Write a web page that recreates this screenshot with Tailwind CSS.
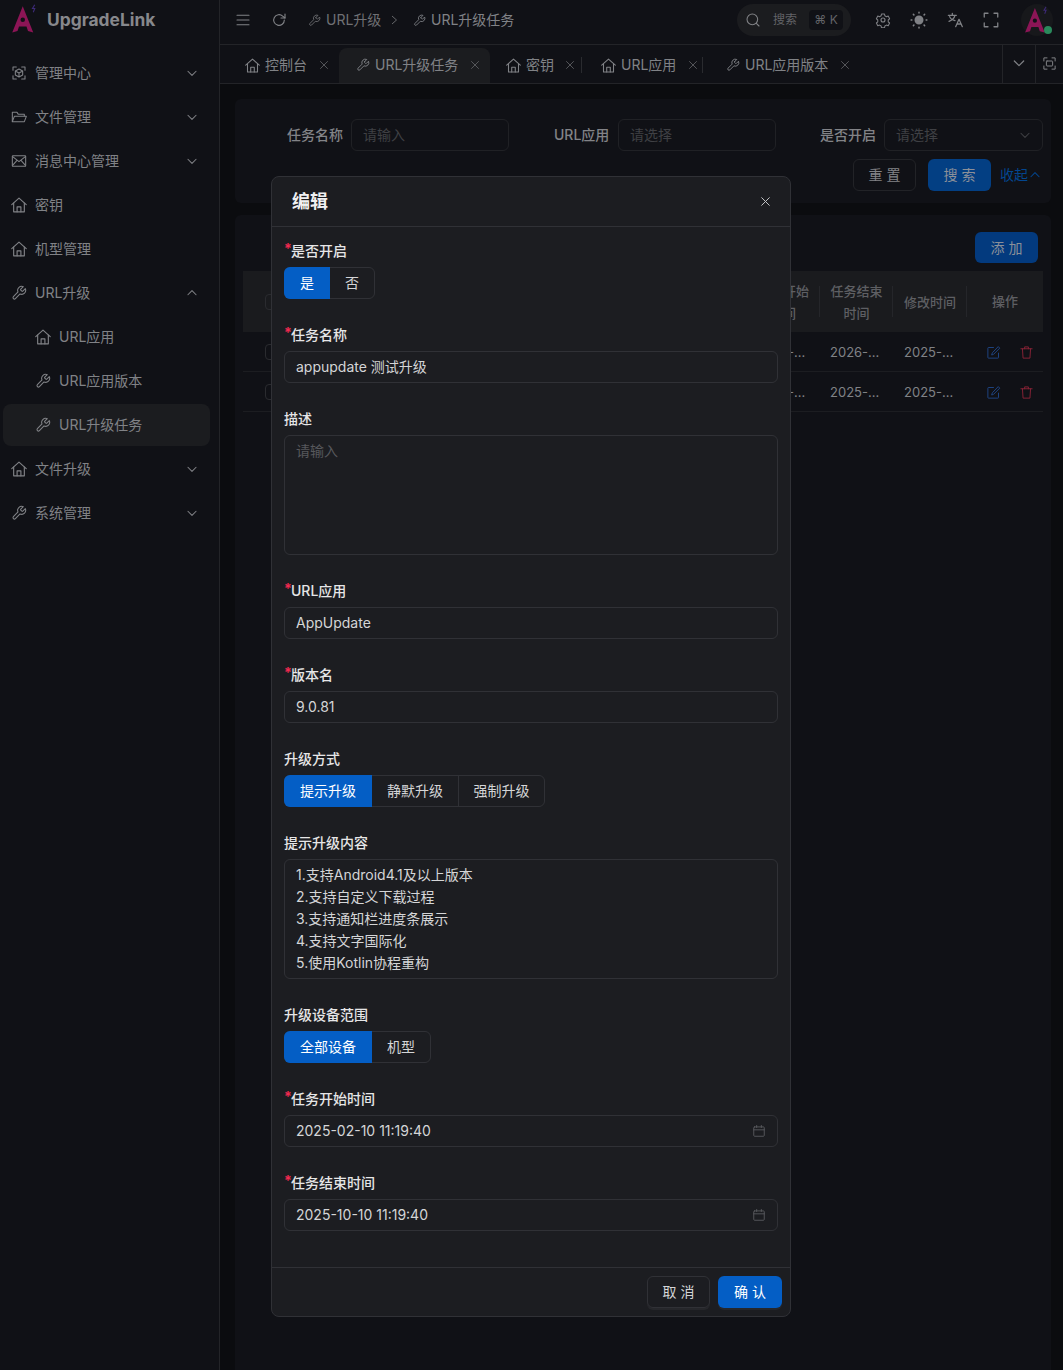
<!DOCTYPE html>
<html lang="zh">
<head>
<meta charset="utf-8">
<script src="https://cdn.jsdelivr.net/npm/@tailwindcss/browser@4"></script>
<title>UpgradeLink</title>
</head>
<body class="font-['Inter','Noto_Sans_CJK_SC',sans-serif] bg-[#0b0c0f] text-sm">
<svg class="hidden">
<symbol id="home" viewBox="1.5 1.5 21 21" fill="none" stroke="currentColor" stroke-width="1.5" stroke-linecap="round" stroke-linejoin="round"><path d="M2.5 11.5 12 3l9.500 8.500"/><path d="M5 9.500V21h14V9.500"/><path d="M9.500 21v-6.500h5V21"/></symbol>
<symbol id="wrench" viewBox="0 0 24 24" fill="none" stroke="currentColor" stroke-width="1.6" stroke-linecap="round" stroke-linejoin="round"><path d="M14.700 6.300a1 1 0 0 0 0 1.400l1.600 1.600a1 1 0 0 0 1.400 0l3.770-3.770a6 6 0 0 1-7.940 7.940l-6.910 6.910a2.120 2.120 0 0 1-3-3l6.910-6.910a6 6 0 0 1 7.940-7.940l-3.760 3.760z"/></symbol>
<symbol id="down" viewBox="0 0 24 24" fill="none" stroke="currentColor" stroke-width="1.800" stroke-linecap="round" stroke-linejoin="round"><path d="m5 9 7 7 7-7"/></symbol>
<symbol id="up" viewBox="0 0 24 24" fill="none" stroke="currentColor" stroke-width="1.800" stroke-linecap="round" stroke-linejoin="round"><path d="m5 15 7-7 7 7"/></symbol>
<symbol id="x" viewBox="0 0 24 24" fill="none" stroke="currentColor" stroke-width="1.800" stroke-linecap="round"><path d="M5 5l14 14M19 5 5 19"/></symbol>
<symbol id="cal" viewBox="0 0 24 24" fill="none" stroke="currentColor" stroke-width="1.500" stroke-linecap="round" stroke-linejoin="round"><rect x="3" y="5" width="18" height="16" rx="1.500"/><path d="M3 10h18M8 2.500V6M16 2.500V6"/></symbol>
<symbol id="logo" viewBox="0 0 40 40"><path d="M17 3 31 38l-7-2-2-6H12l-2 6-7 2z" fill="currentColor"/><circle cx="17" cy="21" r="3" fill="#101116"/><path d="M33 1l-3 5h3l-2 5" fill="none" stroke="#3d2a78" stroke-width="1.500"/></symbol>
<symbol id="edit" viewBox="0 0 24 24" fill="none" stroke="currentColor" stroke-width="1.500" stroke-linecap="round" stroke-linejoin="round"><path d="M20 13v7a1 1 0 0 1-1 1H4a1 1 0 0 1-1-1V5a1 1 0 0 1 1-1h8"/><path d="M20 3l2 2-10 10-3 1 1-3z"/></symbol>
<symbol id="trash" viewBox="0 0 24 24" fill="none" stroke="currentColor" stroke-width="1.500" stroke-linecap="round" stroke-linejoin="round"><path d="M3 6h18M9 6V3h6v3M5.500 6l1 15h11l1-15"/></symbol>
</svg>

<div class="relative flex w-[1063px] h-[1370px] overflow-hidden">
  <!-- sidebar -->
  <aside class="w-[220px] shrink-0 h-full bg-[#101116] border-r border-[#232428] text-[#808286]">
    <div class="h-[44px] flex items-center pl-[10px]">
      <svg class="w-[30px] h-[34px] text-[#8c1556] -mt-[6px]"><use href="#logo"/></svg>
      <span class="ml-[7px] text-[17.4px] font-bold text-[#87888c] leading-none -mt-[4px]">UpgradeLink</span>
    </div>
    <nav class="mt-[7px] flex flex-col">
      <div class="h-[44px] flex items-center pl-[11px] pr-[20px]">
        <svg class="w-[16px] h-[16px]" viewBox="0 0 24 24" fill="none" stroke="currentColor" stroke-width="1.600" stroke-linecap="round" stroke-linejoin="round"><path d="M3 8V3h5M16 3h5v5M21 16v5h-5M8 21H3v-5"/><path d="m12 6 5.500 3v6L12 18l-5.500-3V9zM12 12l5.500-3M12 12 6.500 9M12 12v6"/></svg>
        <span class="ml-[8px] flex-1">管理中心</span><svg class="w-[14px] h-[14px]"><use href="#down"/></svg>
      </div>
      <div class="h-[44px] flex items-center pl-[11px] pr-[20px]">
        <svg class="w-[16px] h-[16px]" viewBox="0 0 24 24" fill="none" stroke="currentColor" stroke-width="1.600" stroke-linejoin="round"><path d="M2 19V5h7l2 3h9v3"/><path d="M2 19l3-8h18l-3 8z"/></svg>
        <span class="ml-[8px] flex-1">文件管理</span><svg class="w-[14px] h-[14px]"><use href="#down"/></svg>
      </div>
      <div class="h-[44px] flex items-center pl-[11px] pr-[20px]">
        <svg class="w-[16px] h-[16px]" viewBox="0 0 24 24" fill="none" stroke="currentColor" stroke-width="1.600" stroke-linejoin="round"><rect x="2" y="4" width="20" height="16" rx="1"/><path d="m2 5 10 8 10-8M2 19l7-8M22 19l-7-8"/></svg>
        <span class="ml-[8px] flex-1">消息中心管理</span><svg class="w-[14px] h-[14px]"><use href="#down"/></svg>
      </div>
      <div class="h-[44px] flex items-center pl-[11px] pr-[20px]">
        <svg class="w-[16px] h-[16px]"><use href="#home"/></svg><span class="ml-[8px] flex-1">密钥</span>
      </div>
      <div class="h-[44px] flex items-center pl-[11px] pr-[20px]">
        <svg class="w-[16px] h-[16px]"><use href="#home"/></svg><span class="ml-[8px] flex-1">机型管理</span>
      </div>
      <div class="h-[44px] flex items-center pl-[11px] pr-[20px]">
        <svg class="w-[16px] h-[16px]"><use href="#wrench"/></svg><span class="ml-[8px] flex-1">URL升级</span><svg class="w-[14px] h-[14px]"><use href="#up"/></svg>
      </div>
      <div class="h-[44px] flex items-center pl-[35px] pr-[20px]">
        <svg class="w-[16px] h-[16px]"><use href="#home"/></svg><span class="ml-[8px] flex-1">URL应用</span>
      </div>
      <div class="h-[44px] flex items-center pl-[35px] pr-[20px]">
        <svg class="w-[16px] h-[16px]"><use href="#wrench"/></svg><span class="ml-[8px] flex-1">URL应用版本</span>
      </div>
      <div class="h-[42px] my-[1px] ml-[3px] mr-[9px] rounded-lg bg-[#1b1c1f] flex items-center pl-[32px]">
        <svg class="w-[16px] h-[16px]"><use href="#wrench"/></svg><span class="ml-[8px] flex-1">URL升级任务</span>
      </div>
      <div class="h-[44px] flex items-center pl-[11px] pr-[20px]">
        <svg class="w-[16px] h-[16px]"><use href="#home"/></svg><span class="ml-[8px] flex-1">文件升级</span><svg class="w-[14px] h-[14px]"><use href="#down"/></svg>
      </div>
      <div class="h-[44px] flex items-center pl-[11px] pr-[20px]">
        <svg class="w-[16px] h-[16px]"><use href="#wrench"/></svg><span class="ml-[8px] flex-1">系统管理</span><svg class="w-[14px] h-[14px]"><use href="#down"/></svg>
      </div>
    </nav>
  </aside>

  <div class="flex-1 min-w-0 flex flex-col">
    <!-- header -->
    <header class="h-[45px] shrink-0 bg-[#101116] border-b border-[#232428] flex items-center pb-[4px] text-[#808286]">
      <svg class="ml-[15px] w-[16px] h-[16px]" viewBox="0 0 24 24" fill="none" stroke="currentColor" stroke-width="1.600" stroke-linecap="round"><path d="M3 5h18M3 12h18M3 19h18"/></svg>
      <svg class="ml-[20px] w-[16px] h-[16px]" viewBox="0 0 24 24" fill="none" stroke="currentColor" stroke-width="1.700" stroke-linecap="round" stroke-linejoin="round"><path d="M20 12a8 8 0 1 1-2.500-5.800L21 9"/><path d="M21 3v6h-6"/></svg>
      <svg class="ml-[21px] w-[13px] h-[13px] text-[#6f7074]"><use href="#wrench"/></svg>
      <span class="ml-[5px] text-[#6f7074] w-[56px]">URL升级</span>
      <svg class="ml-[6px] w-[12px] h-[12px] text-[#6f7074]" viewBox="0 0 24 24" fill="none" stroke="currentColor" stroke-width="1.800"><path d="m8 4 9 8-9 8"/></svg>
      <svg class="ml-[13px] w-[13px] h-[13px]"><use href="#wrench"/></svg>
      <span class="ml-[5px] w-[85px]">URL升级任务</span>
      <div class="ml-[221px] w-[114px] h-[32px] rounded-full bg-[#1b1c1f] flex items-center pl-[8px]">
        <svg class="w-[16px] h-[16px]" viewBox="0 0 24 24" fill="none" stroke="currentColor" stroke-width="1.600" stroke-linecap="round"><circle cx="11" cy="11" r="8"/><path d="m17 17 4 4"/></svg>
        <span class="ml-[12px] text-xs text-[#626367]">搜索</span>
        <span class="ml-[12px] w-[34px] h-[20px] rounded bg-[#101116] text-xs text-[#626367] flex items-center justify-center">⌘ K</span>
      </div>
      <svg class="ml-[24px] w-[16px] h-[16px]" viewBox="0 0 24 24" fill="none" stroke="currentColor" stroke-width="1.700" stroke-linejoin="round"><path d="M9.500 2h5l.6 3 2.700 1.500 2.900-1 2.300 4.500-2.300 2 0 3 2.300 2-2.300 4.500-2.900-1-2.700 1.500-.6 3h-5l-.6-3-2.700-1.500-2.900 1L1 17l2.300-2v-3L1 10l2.300-4.500 2.900 1L8.900 5z" transform="translate(1.200 1.200) scale(.9)"/><circle cx="12" cy="12" r="3"/></svg>
      <svg class="ml-[19px] w-[18px] h-[18px]" viewBox="0 0 24 24" fill="none" stroke="currentColor" stroke-width="2" stroke-linecap="round"><circle cx="12" cy="12" r="5" fill="currentColor"/><path d="M12 1.500v1M12 21.500v1M1.500 12h1M21.500 12h1M4.500 4.500l.7.7M18.800 18.800l.7.7M4.500 19.500l.7-.7M18.800 5.200l.7-.7"/></svg>
      <svg class="ml-[19px] w-[16px] h-[16px]" viewBox="0 0 24 24" fill="none" stroke="currentColor" stroke-width="1.900" stroke-linecap="round" stroke-linejoin="round"><path d="M2 5h12M8 2v3M12 5c-1 4-4 7-9 9M4 7c1 3 4 5 8 6M13 22l5-11 5 11M15 18h6"/></svg>
      <svg class="ml-[19px] w-[18px] h-[18px]" viewBox="0 0 24 24" fill="none" stroke="currentColor" stroke-width="1.700" stroke-linecap="round" stroke-linejoin="round"><path d="M3 8V3h5M16 3h5v5M21 16v5h-5M8 21H3v-5"/></svg>
      <div class="relative ml-[21px] w-[32px] h-[32px] rounded-full bg-[#17181b] flex items-center justify-center">
        <svg class="w-[28px] h-[32px] text-[#8c1556]"><use href="#logo"/></svg>
        <span class="absolute right-[1px] bottom-[2px] w-[8px] h-[8px] rounded-full bg-[#2a8a5c]"></span>
      </div>
    </header>
    <!-- tabs -->
    <div class="h-[39px] shrink-0 bg-[#101116] border-b border-[#232428] flex items-end text-[#808286] relative">
      <div class="w-[782px] h-full flex items-end overflow-hidden">
        <div class="h-[35px] flex items-center pb-[1px] pl-[25px] w-[119px]">
          <svg class="w-[15px] h-[15px]"><use href="#home"/></svg><span class="ml-[5px]">控制台</span><svg class="ml-[11px] w-[12px] h-[12px] text-[#5c5d61]"><use href="#x"/></svg>
        </div>
        <div class="h-[35px] w-[151px] flex items-center pb-[1px] pl-[17px] rounded-t-lg bg-[#1b1c1f]">
          <svg class="w-[14px] h-[14px]"><use href="#wrench"/></svg><span class="ml-[5px]">URL升级任务</span><svg class="ml-[11px] w-[12px] h-[12px] text-[#5c5d61]"><use href="#x"/></svg>
        </div>
        <div class="h-[35px] w-[92px] flex items-center pb-[1px] pl-[16px] relative">
          <svg class="w-[15px] h-[15px]"><use href="#home"/></svg><span class="ml-[5px]">密钥</span><svg class="ml-[10px] w-[12px] h-[12px] text-[#5c5d61]"><use href="#x"/></svg>
          <span class="absolute right-0 top-[9px] h-[16px] w-px bg-[#2a2b2f]"></span>
        </div>
        <div class="h-[35px] w-[121px] flex items-center pb-[1px] pl-[19px] relative">
          <svg class="w-[15px] h-[15px]"><use href="#home"/></svg><span class="ml-[5px]">URL应用</span><svg class="ml-[11px] w-[12px] h-[12px] text-[#5c5d61]"><use href="#x"/></svg>
          <span class="absolute right-0 top-[9px] h-[16px] w-px bg-[#2a2b2f]"></span>
        </div>
        <div class="h-[35px] flex items-center pb-[1px] pl-[23px]">
          <svg class="w-[14px] h-[14px]"><use href="#wrench"/></svg><span class="ml-[5px]">URL应用版本</span><svg class="ml-[11px] w-[12px] h-[12px] text-[#5c5d61]"><use href="#x"/></svg>
        </div>
      </div>
      <div class="w-[33px] h-full pb-[2px] border-l border-[#232428] flex items-center justify-center"><svg class="w-[16px] h-[16px]"><use href="#down"/></svg></div>
      <div class="flex-1 h-full pb-[2px] border-l border-[#232428] flex items-center justify-center"><svg class="w-[15px] h-[15px]" viewBox="0 0 24 24" fill="none" stroke="currentColor" stroke-width="1.600" stroke-linecap="round" stroke-linejoin="round"><path d="M3 8V3h5M16 3h5v5M21 16v5h-5M8 21H3v-5"/><rect x="7" y="8" width="10" height="8" rx="1"/></svg></div>
    </div>
    <!-- main -->
    <main class="flex-1 min-h-0 px-[15px] pt-[15px] flex flex-col gap-[12px] text-[#808286]">
      <section class="h-[104px] shrink-0 w-[816px] rounded-md bg-[#101116] pt-[20px]">
        <div class="flex items-center h-[32px] pl-[52px]">
          <span class="w-[56px] font-medium text-[#828387]">任务名称</span>
          <div class="ml-[8px] w-[158px] h-[32px] rounded-md border border-[#202125] flex items-center px-[11px] text-[#3f4044]">请输入</div>
          <span class="ml-[45px] w-[56px] font-medium text-[#828387]">URL应用</span>
          <div class="ml-[8px] w-[158px] h-[32px] rounded-md border border-[#202125] flex items-center px-[11px] text-[#3f4044]">请选择</div>
          <span class="ml-[44px] w-[56px] font-medium text-[#828387]">是否开启</span>
          <div class="ml-[8px] w-[159px] h-[32px] rounded-md border border-[#202125] flex items-center justify-between pl-[11px] pr-[10px] text-[#3f4044]">请选择<svg class="w-[14px] h-[14px]"><use href="#down"/></svg></div>
        </div>
        <div class="flex items-center justify-end h-[32px] mt-[8px] pr-[4px]">
          <div class="w-[63px] h-[32px] rounded-md border border-[#222327] flex items-center justify-center text-[#828387]">重 置</div>
          <div class="ml-[12px] w-[63px] h-[32px] rounded-md bg-[#033f83] flex items-center justify-center text-[#8b9099]">搜 索</div>
          <span class="ml-[9px] text-[#03468f]">收起</span>
          <svg class="w-[14px] h-[14px] text-[#03468f] mr-[5px]"><use href="#up"/></svg>
        </div>
      </section>
      <section class="flex-1 w-[816px] bg-[#101116] rounded-t-md pl-[8px] pt-[17px]">
        <div class="h-[31px] flex justify-end pr-[13px]">
          <div class="w-[63px] h-[31px] rounded-md bg-[#033a7e] flex items-center justify-center text-[#8b9099]">添 加</div>
        </div>
        <div class="mt-[8px] w-[800px] grid grid-cols-[503px_74px_73px_74px_76px] rounded-t-md text-[13px]">
          <div class="h-[61px] bg-[#1a1b1e] pl-[22px] flex items-center"><span class="w-[16px] h-[16px] rounded border border-[#2a2b2f]"></span></div>
          <div class="relative h-[61px] bg-[#1a1b1e] flex items-center justify-center text-center leading-[22px] text-[#5e5f63] font-medium">任务开始<br>时间<span class="absolute right-0 top-[15px] h-[31px] w-px bg-[#25262a]"></span></div>
          <div class="relative h-[61px] bg-[#1a1b1e] flex items-center justify-center text-center leading-[22px] text-[#5e5f63] font-medium">任务结束<br>时间<span class="absolute right-0 top-[15px] h-[31px] w-px bg-[#25262a]"></span></div>
          <div class="relative h-[61px] bg-[#1a1b1e] flex items-center justify-center text-center leading-[22px] text-[#5e5f63] font-medium">修改时间<span class="absolute right-0 top-[15px] h-[31px] w-px bg-[#25262a]"></span></div>
          <div class="h-[61px] bg-[#1a1b1e] flex items-center justify-center text-center text-[#5e5f63] font-medium">操作</div>

          <div class="h-[40px] border-b border-[#1c1d21] pl-[22px] flex items-center"><span class="w-[16px] h-[16px] rounded border border-[#2a2b2f]"></span></div>
          <div class="h-[40px] pt-[2px] border-b border-[#1c1d21] flex items-center pl-[10px]">2025-...</div>
          <div class="h-[40px] pt-[2px] border-b border-[#1c1d21] flex items-center pl-[10px]">2026-...</div>
          <div class="h-[40px] pt-[2px] border-b border-[#1c1d21] flex items-center pl-[11px]">2025-...</div>
          <div class="h-[40px] pt-[2px] border-b border-[#1c1d21] flex items-center pl-[19px] gap-[18px]"><svg class="w-[15px] h-[15px] text-[#1f4585]"><use href="#edit"/></svg><svg class="w-[15px] h-[15px] text-[#8a2236]"><use href="#trash"/></svg></div>

          <div class="h-[40px] border-b border-[#1c1d21] pl-[22px] flex items-center"><span class="w-[16px] h-[16px] rounded border border-[#2a2b2f]"></span></div>
          <div class="h-[40px] pt-[2px] border-b border-[#1c1d21] flex items-center pl-[10px]">2025-...</div>
          <div class="h-[40px] pt-[2px] border-b border-[#1c1d21] flex items-center pl-[10px]">2025-...</div>
          <div class="h-[40px] pt-[2px] border-b border-[#1c1d21] flex items-center pl-[11px]">2025-...</div>
          <div class="h-[40px] pt-[2px] border-b border-[#1c1d21] flex items-center pl-[19px] gap-[18px]"><svg class="w-[15px] h-[15px] text-[#1f4585]"><use href="#edit"/></svg><svg class="w-[15px] h-[15px] text-[#8a2236]"><use href="#trash"/></svg></div>
        </div>
      </section>
    </main>
  </div>

  <!-- modal -->
  <div class="absolute left-[271px] top-[176px] w-[520px] h-[1141px] rounded-lg bg-[#1c1d21] border border-[#303136] flex flex-col text-[#d4d5d7]">
    <div class="h-[50px] shrink-0 border-b border-[#303136] flex items-center justify-between pl-[20px] pr-[18px]">
      <span class="text-[18px] font-bold text-[#f0f0f1]">编辑</span>
      <svg class="w-[13px] h-[13px] text-[#c4c5c7]"><use href="#x"/></svg>
    </div>
    <div class="flex-1 px-[12px] pt-[8px]">
      <div class="h-[32px] flex items-center font-medium text-[#e6e6e7]"><span class="w-[7px] shrink-0 text-[#f0294f] font-bold -mt-[4px]">*</span>是否开启</div>
      <div class="flex h-[32px] w-[91px] mb-[20px] rounded-md border border-[#303136]">
        <div class="w-[46px] -my-px -ml-px rounded-l-md bg-[#045ec5] text-white flex items-center justify-center">是</div>
        <div class="flex-1 flex items-center justify-center">否</div>
      </div>

      <div class="h-[32px] flex items-center font-medium text-[#e6e6e7]"><span class="w-[7px] shrink-0 text-[#f0294f] font-bold -mt-[4px]">*</span>任务名称</div>
      <div class="h-[32px] mb-[20px] rounded-md border border-[#303136] flex items-center px-[11px]">appupdate 测试升级</div>

      <div class="h-[32px] flex items-center font-medium text-[#e6e6e7]">描述</div>
      <div class="h-[120px] mb-[20px] rounded-md border border-[#303136] px-[11px] pt-[4px] leading-[22px] text-[#57585c]">请输入</div>

      <div class="h-[32px] flex items-center font-medium text-[#e6e6e7]"><span class="w-[7px] shrink-0 text-[#f0294f] font-bold -mt-[4px]">*</span>URL应用</div>
      <div class="h-[32px] mb-[20px] rounded-md border border-[#303136] flex items-center px-[11px]">AppUpdate</div>

      <div class="h-[32px] flex items-center font-medium text-[#e6e6e7]"><span class="w-[7px] shrink-0 text-[#f0294f] font-bold -mt-[4px]">*</span>版本名</div>
      <div class="h-[32px] mb-[20px] rounded-md border border-[#303136] flex items-center px-[11px]">9.0.81</div>

      <div class="h-[32px] flex items-center font-medium text-[#e6e6e7]">升级方式</div>
      <div class="flex h-[32px] w-[261px] mb-[20px] rounded-md border border-[#303136]">
        <div class="w-[88px] -my-px -ml-px rounded-l-md bg-[#045ec5] text-white flex items-center justify-center">提示升级</div>
        <div class="w-[87px] border-r border-[#303136] flex items-center justify-center">静默升级</div>
        <div class="flex-1 flex items-center justify-center">强制升级</div>
      </div>

      <div class="h-[32px] flex items-center font-medium text-[#e6e6e7]">提示升级内容</div>
      <div class="h-[120px] mb-[20px] rounded-md border border-[#303136] px-[11px] pt-[4px] leading-[22px]">1.支持Android4.1及以上版本<br>2.支持自定义下载过程<br>3.支持通知栏进度条展示<br>4.支持文字国际化<br>5.使用Kotlin协程重构</div>

      <div class="h-[32px] flex items-center font-medium text-[#e6e6e7]">升级设备范围</div>
      <div class="flex h-[32px] w-[147px] mb-[20px] rounded-md border border-[#303136]">
        <div class="w-[88px] -my-px -ml-px rounded-l-md bg-[#045ec5] text-white flex items-center justify-center">全部设备</div>
        <div class="flex-1 flex items-center justify-center">机型</div>
      </div>

      <div class="h-[32px] flex items-center font-medium text-[#e6e6e7]"><span class="w-[7px] shrink-0 text-[#f0294f] font-bold -mt-[4px]">*</span>任务开始时间</div>
      <div class="h-[32px] mb-[20px] rounded-md border border-[#303136] flex items-center justify-between pl-[11px] pr-[11px]">2025-02-10 11:19:40<svg class="w-[14px] h-[14px] text-[#5c5d61]"><use href="#cal"/></svg></div>

      <div class="h-[32px] flex items-center font-medium text-[#e6e6e7]"><span class="w-[7px] shrink-0 text-[#f0294f] font-bold -mt-[4px]">*</span>任务结束时间</div>
      <div class="h-[32px] rounded-md border border-[#303136] flex items-center justify-between pl-[11px] pr-[11px]">2025-10-10 11:19:40<svg class="w-[14px] h-[14px] text-[#5c5d61]"><use href="#cal"/></svg></div>
    </div>
    <div class="h-[49px] shrink-0 border-t border-[#303136] flex items-center justify-end pr-[8px] gap-[8px]">
      <div class="w-[63px] h-[32px] rounded-md border border-[#303136] shadow-[0_2px_0_#26272b] flex items-center justify-center">取 消</div>
      <div class="w-[64px] h-[32px] rounded-md bg-[#045ec5] shadow-[0_2px_0_#26272b] text-white flex items-center justify-center">确 认</div>
    </div>
  </div>
</div>
</body>
</html>
